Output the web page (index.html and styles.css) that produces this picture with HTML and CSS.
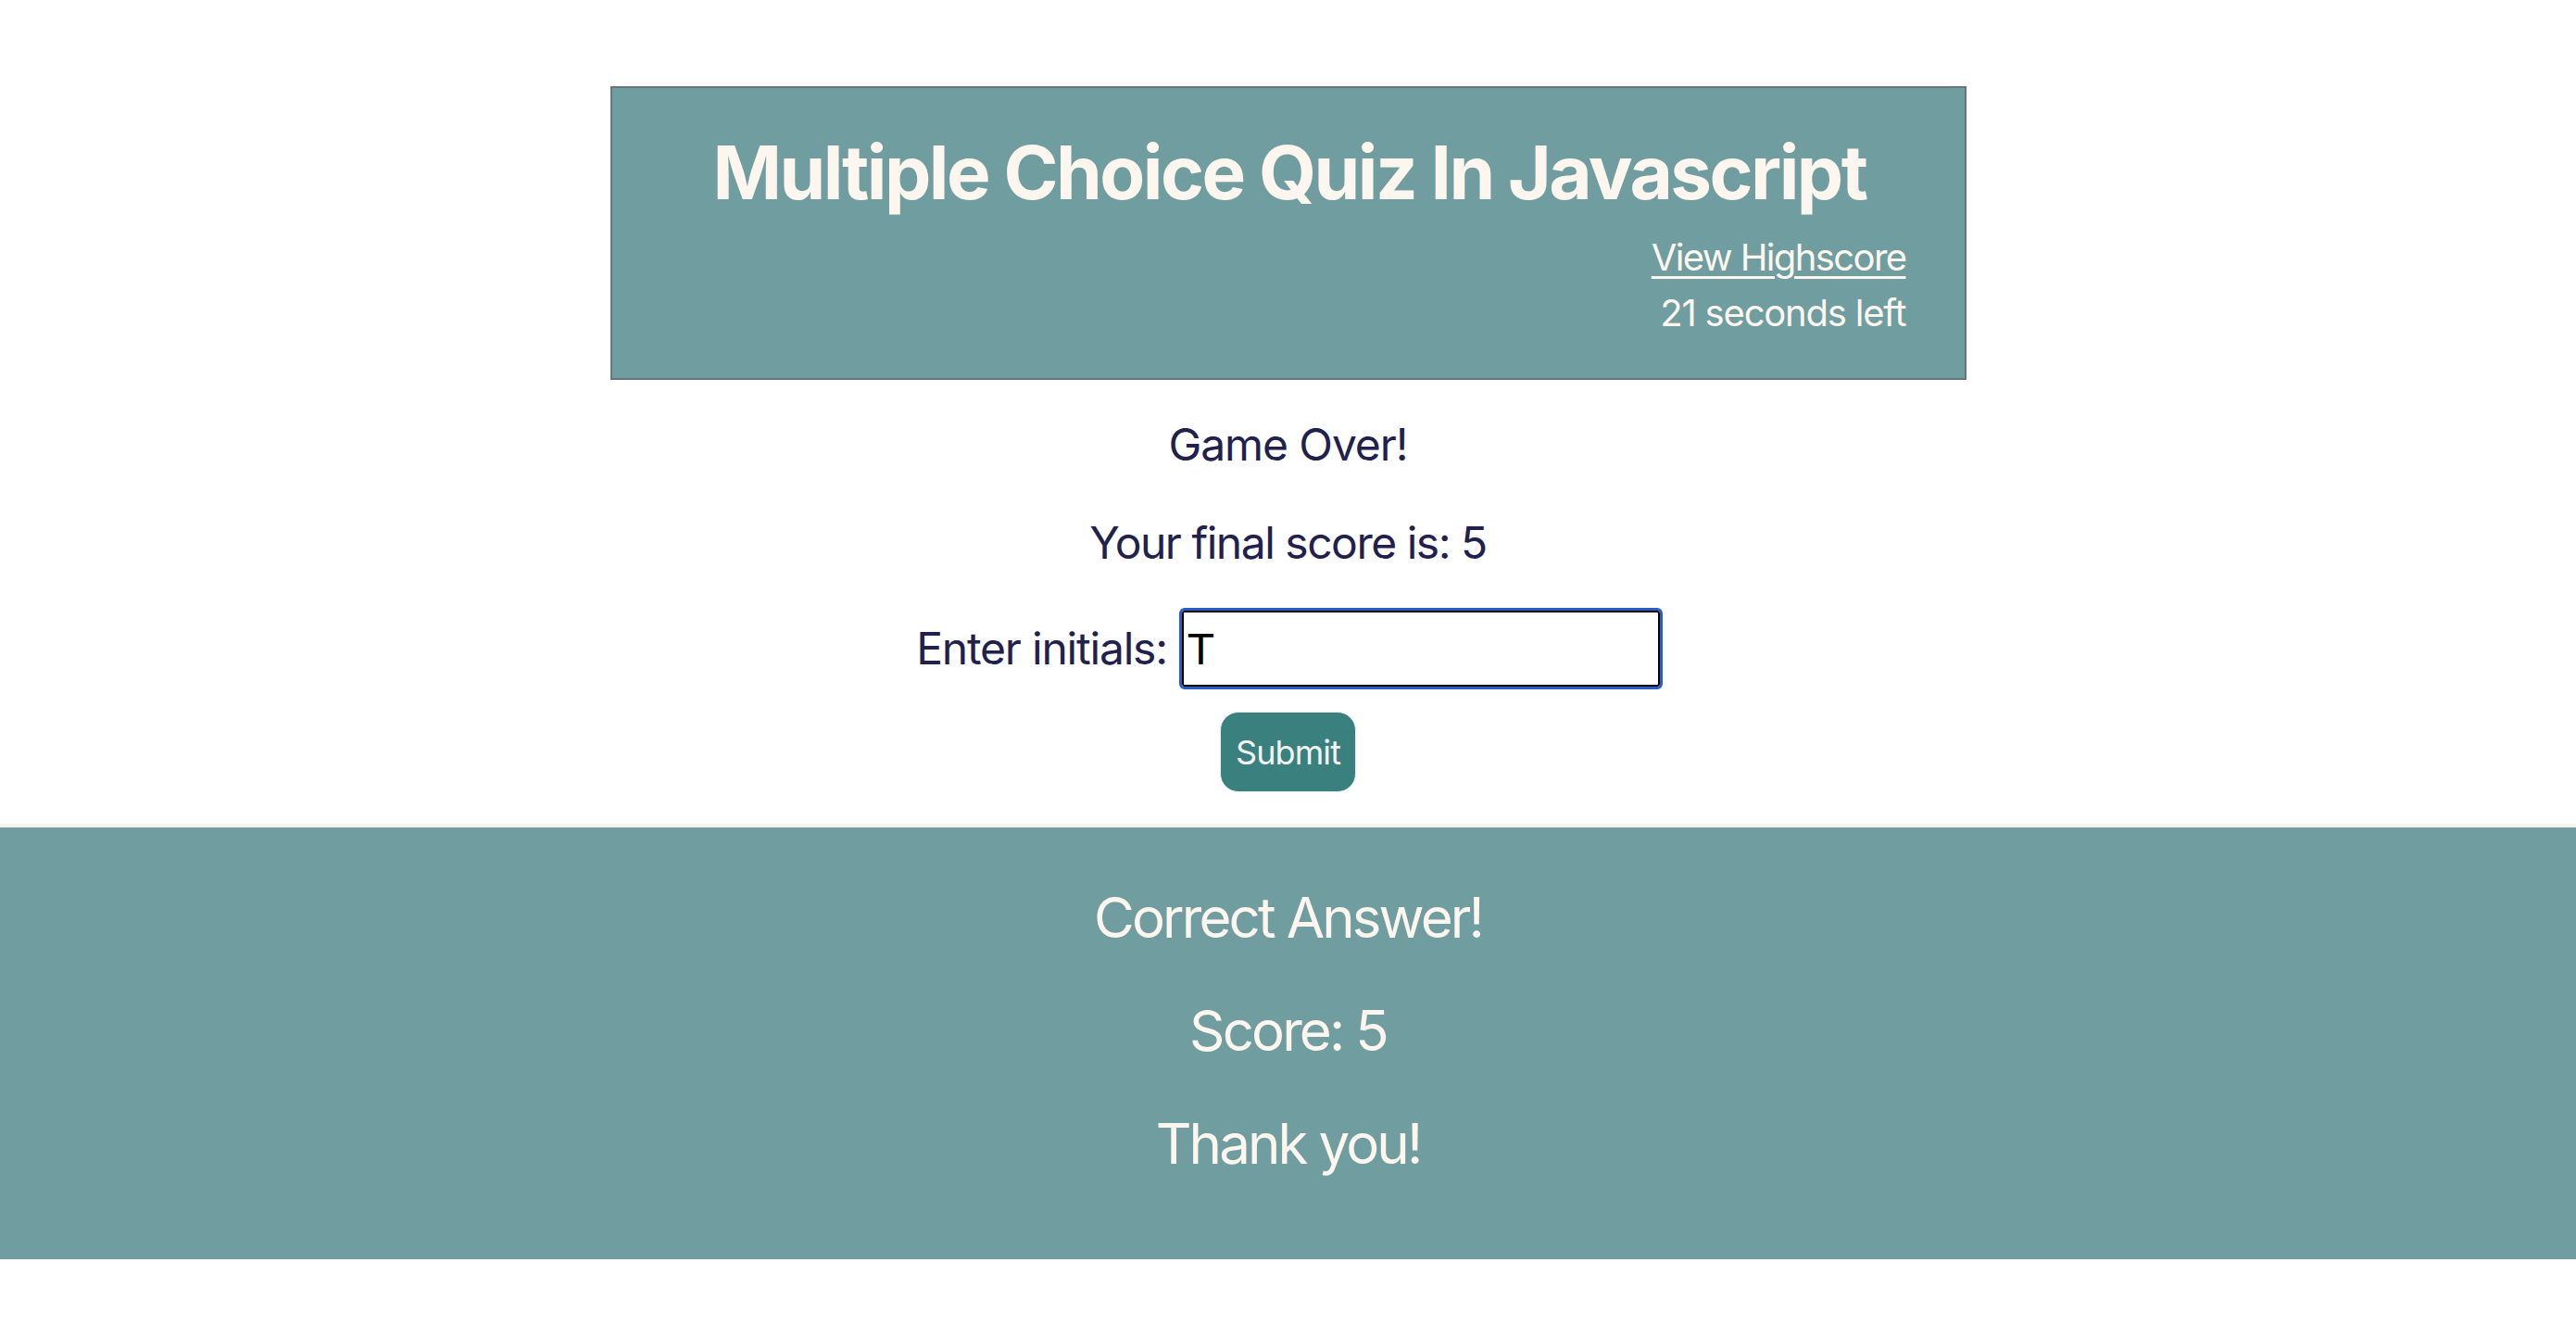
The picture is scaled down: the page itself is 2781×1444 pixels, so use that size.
FILE: index.html
```html
<!DOCTYPE html>
<html lang="en">
<head>
<meta charset="utf-8">
<title>Multiple Choice Quiz In Javascript</title>
<link rel="stylesheet" href="styles.css">
</head>
<body>
<header class="quiz-header">
  <h1 class="quiz-title">Multiple Choice Quiz In Javascript</h1>
  <nav class="quiz-nav">
    <a class="highscore-link" href="#">View Highscore</a>
    <div class="timer">21 seconds left</div>
  </nav>
</header>
<main class="game-over">
  <p class="line line-over">Game Over!</p>
  <p class="line line-score">Your final score is: 5</p>
  <form class="initials-form">
    <div class="initials-row">
      <label class="line line-label" for="initials">Enter initials:</label>
      <input class="initials-input" id="initials" type="text" value="T">
    </div>
    <button class="submit-btn" type="button">Submit</button>
  </form>
</main>
<footer class="feedback">
  <p class="feedback-line">Correct Answer!</p>
  <p class="feedback-line">Score: 5</p>
  <p class="feedback-line">Thank you!</p>
</footer>
</body>
</html>
```
FILE: styles.css
```css
html, body {
  margin: 0;
  padding: 0;
  background: #ffffff;
}
body {
  font-family: Inter, "Noto Sans", sans-serif;
  color: #22214d;
  padding-top: 93px;
}
.quiz-header {
  box-sizing: border-box;
  width: 1464px;
  margin: 0 auto;
  background: #709d9f;
  border: 2px solid #687680;
  padding: 41px 63px 40px 66px;
  display: flex;
  flex-direction: column;
}
.quiz-title {
  margin: 0;
  font-size: 80px;
  line-height: 100px;
  font-weight: 700;
  color: #fcf6ee;
  text-align: center;
  white-space: nowrap;
  letter-spacing: -0.032em;
}
.quiz-nav {
  margin-top: 12px;
  display: flex;
  flex-direction: column;
  align-items: flex-end;
  font-size: 40px;
  line-height: 60px;
  color: #fcf6ee;
}
.highscore-link {
  color: #fcf6ee;
  text-decoration: underline;
  text-underline-offset: 6px;
  text-decoration-thickness: 3px;
  letter-spacing: -0.04em;
}
.timer {
  letter-spacing: -0.03em;
}
.game-over {
  display: flex;
  flex-direction: column;
  align-items: center;
  padding-top: 40px;
  padding-bottom: 34px;
}
.line {
  margin: 0;
  font-size: 48px;
  line-height: 60px;
}
.line-over {
  letter-spacing: -0.023em;
}
.line-score {
  letter-spacing: -0.031em;
}
.line-label {
  letter-spacing: -0.025em;
}
.game-over > .line + .line {
  margin-top: 46px;
}
.initials-form {
  margin-top: 43px;
  display: flex;
  flex-direction: column;
  align-items: center;
}
.initials-row {
  display: flex;
  align-items: center;
  gap: 16px;
}
.initials-input {
  box-sizing: border-box;
  width: 516px;
  height: 82px;
  border: 2px solid #000;
  border-radius: 3px;
  outline: 3px solid #2a5cc6;
  outline-offset: 0;
  padding: 1px 4px;
  font-family: "Liberation Sans", Arial, sans-serif;
  font-size: 48px;
  color: #000;
  background: #fff;
}
.submit-btn {
  margin-top: 27px;
  box-sizing: border-box;
  height: 87px;
  padding: 0 16px;
  border: 1px solid #e9efee;
  border-radius: 20px;
  background: #3a807e;
  color: #f3f4f2;
  font-family: Inter, "Noto Sans", sans-serif;
  font-size: 36px;
  letter-spacing: -0.025em;
}
.feedback {
  border-top: 4px solid #fbf4ee;
  background: #709d9f;
  padding: 57px 0 85px;
  display: flex;
  flex-direction: column;
  align-items: center;
  gap: 42px;
}
.feedback-line {
  margin: 0;
  font-size: 60px;
  line-height: 80px;
  color: #fcf6ee;
  letter-spacing: -0.048em;
}
```
